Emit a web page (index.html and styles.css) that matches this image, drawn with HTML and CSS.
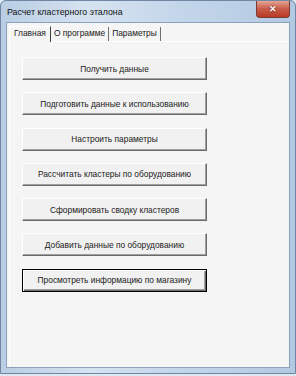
FILE: index.html
```html
<!DOCTYPE html>
<html lang="ru">
<head>
    <meta charset="UTF-8">
    <title>Расчет кластерного эталона</title>
    <link rel="stylesheet" href="styles.css">
</head>
<body>
    <div class="window">
        <div class="titlebar">
            <span class="title">Расчет кластерного эталона</span>
            <button class="close">&#10005;</button>
        </div>
        <div class="client">
            <div class="tabs">
                <div class="tab active">Главная</div>
                <div class="tab">О программе</div>
                <div class="tab">Параметры</div>
            </div>
            <div class="panel">
                <button class="cmd">Получить данные</button>
                <button class="cmd">Подготовить данные к использованию</button>
                <button class="cmd">Настроить параметры</button>
                <button class="cmd">Рассчитать кластеры по оборудованию</button>
                <button class="cmd">Сформировать сводку кластеров</button>
                <button class="cmd">Добавить данные по оборудованию</button>
                <button class="cmd default">Просмотреть информацию по магазину</button>
            </div>
        </div>
    </div>
</body>
</html>
```

FILE: styles.css
```css
* {
    margin: 0;
    padding: 0;
    box-sizing: border-box;
}

body {
    width: 296px;
    height: 376px;
    overflow: hidden;
    font-family: 'Liberation Sans', Arial, sans-serif;
    background: #dfe9f4;
}

.window {
    width: 296px;
    height: 374px;
    display: flex;
    flex-direction: column;
    background: linear-gradient(90deg, #b9cde3, #d6e3f1 30%, #c4d6ea 60%, #b3c9e2);
    border: 1px solid #6f87a3;
    border-radius: 6px 6px 0 0;
}

.titlebar {
    height: 21px;
    display: flex;
    align-items: flex-start;
    justify-content: space-between;
    padding-left: 6px;
}

.title {
    font-size: 8.8px;
    color: #111;
    margin-top: 6px;
}

.close {
    width: 34px;
    height: 17px;
    margin-right: 5px;
    border: 1px solid #7d3a33;
    border-top: none;
    border-radius: 0 0 4px 4px;
    background: linear-gradient(#e4a596, #c95a48 50%, #b83a28);
    color: #fff;
    font-size: 9px;
    font-weight: bold;
    line-height: 15px;
    text-shadow: 0 0 2px #5a1a10;
}

.client {
    flex: 1;
    margin: 0 5px 5px 5px;
    background: #f5f5f5;
    border: 1px solid #8ba2bc;
    padding: 2px 0 0 2px;
    display: flex;
    flex-direction: column;
}

.tabs {
    display: flex;
    height: 16px;
    align-items: flex-end;
    position: relative;
    z-index: 1;
}

.tab {
    font-size: 8.4px;
    color: #1a1a1a;
    padding: 0 3px;
    height: 14px;
    line-height: 13px;
    border-right: 1px solid #707070;
}

.tab.active {
    height: 16px;
    padding: 0 4px;
    background: #f5f5f5;
    border-left: 1px solid #fff;
    border-top: 1px solid #fff;
    border-right: 1px solid #404040;
    margin-bottom: -1px;
}

.panel {
    flex: 1;
    border-top: 1px solid #fff;
    border-left: 1px solid #fff;
    display: flex;
    flex-direction: column;
    gap: 12.3px;
    padding: 15px 0 0 12px;
}

.cmd {
    width: 185px;
    height: 23px;
    font-family: 'Liberation Sans', Arial, sans-serif;
    font-size: 8.4px;
    color: #222;
    background: #f1f1f1;
    border: 1px solid;
    border-color: #fff #6a6a6a #6a6a6a #fff;
    box-shadow: inset -1px -1px 0 #a0a0a0;
}

.cmd.default {
    border: 1px solid #000;
    box-shadow: inset 1px 1px 0 #fff, inset -1px -1px 0 #6a6a6a, inset -2px -2px 0 #a0a0a0;
}
```
